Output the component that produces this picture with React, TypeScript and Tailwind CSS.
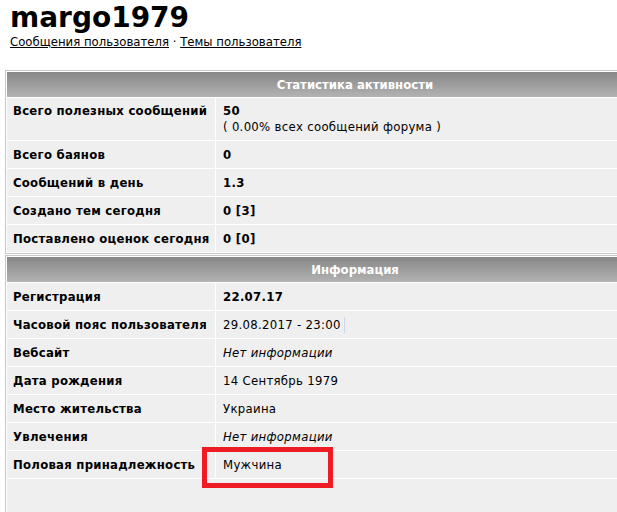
import React from 'react';

type Row = {
  label: string;
  value: React.ReactNode;
  tall?: boolean;
};

const statRows: Row[] = [
  {
    label: 'Всего полезных сообщений',
    tall: true,
    value: (
      <div>
        <div className="font-bold">50</div>
        <div>( 0.00% всех сообщений форума )</div>
      </div>
    ),
  },
  { label: 'Всего баянов', value: <span className="font-bold">0</span> },
  { label: 'Сообщений в день', value: <span className="font-bold">1.3</span> },
  { label: 'Создано тем сегодня', value: <span className="font-bold">0 [3]</span> },
  { label: 'Поставлено оценок сегодня', value: <span className="font-bold">0 [0]</span> },
];

const infoRows: Row[] = [
  { label: 'Регистрация', value: <span className="font-bold">22.07.17</span> },
  {
    label: 'Часовой пояс пользователя',
    value: <span className="border-r border-[#c9d6e8] pr-[3px]">29.08.2017 - 23:00</span>,
  },
  { label: 'Вебсайт', value: <i>Нет информации</i> },
  { label: 'Дата рождения', value: '14 Сентябрь 1979' },
  { label: 'Место жительства', value: 'Украина' },
  { label: 'Увлечения', value: <i>Нет информации</i> },
  { label: 'Половая принадлежность', value: 'Мужчина' },
];

function Table({ title, rows, tail }: { title: string; rows: Row[]; tail?: boolean }) {
  return (
    <div className="ml-[5px] w-[700px] shrink-0 border border-[#c6c6c6] bg-white p-px">
      <div className="grid grid-cols-[208px_1fr] gap-px">
        <div className="col-span-2 flex h-[25px] items-center justify-center bg-gradient-to-b from-[#878787] to-[#b3b3b3] font-bold text-white">
          {title}
        </div>
        {rows.map((r) => (
          <React.Fragment key={r.label}>
            <div
              className={`flex whitespace-nowrap bg-[#efefef] pl-[6px] font-bold tracking-[0.25px] ${
                r.tall ? 'h-[42px] items-start pt-[5px]' : 'h-[27px] items-center'
              }`}
            >
              {r.label}
            </div>
            <div
              className={`flex whitespace-nowrap bg-[#efefef] pl-[7px] tracking-[0.3px] ${
                r.tall ? 'h-[42px] items-start pt-[5px]' : 'h-[27px] items-center'
              }`}
            >
              {r.value}
            </div>
          </React.Fragment>
        ))}
        {tail && <div className="col-span-2 h-[60px] bg-[#efefef]" />}
      </div>
    </div>
  );
}

export default function App() {
  return (
    <div
      className="relative h-[512px] overflow-hidden bg-white text-[13px] leading-[16px] text-black"
      style={{ fontFamily: '"DejaVu Sans Condensed", "DejaVu Sans", Verdana, sans-serif', fontStretch: 'condensed' }}
    >
      <h1
        className="pl-[10px] pt-[2px] text-[28px] font-bold leading-[32px]"
        style={{ fontFamily: '"DejaVu Sans", Verdana, sans-serif', fontStretch: 'normal' }}
      >
        margo1979
      </h1>
      <div className="pl-[10px]">
        <a href="#" className="underline">Сообщения пользователя</a>
        {' · '}
        <a href="#" className="underline">Темы пользователя</a>
      </div>
      <div className="mt-[20px]">
        <Table title="Статистика активности" rows={statRows} />
        <div className="h-px" />
        <Table title="Информация" rows={infoRows} tail />
      </div>
      <div className="absolute left-[202px] top-[447px] h-[41px] w-[131px] border-[5px] border-[#ed1c24]" />
    </div>
  );
}
